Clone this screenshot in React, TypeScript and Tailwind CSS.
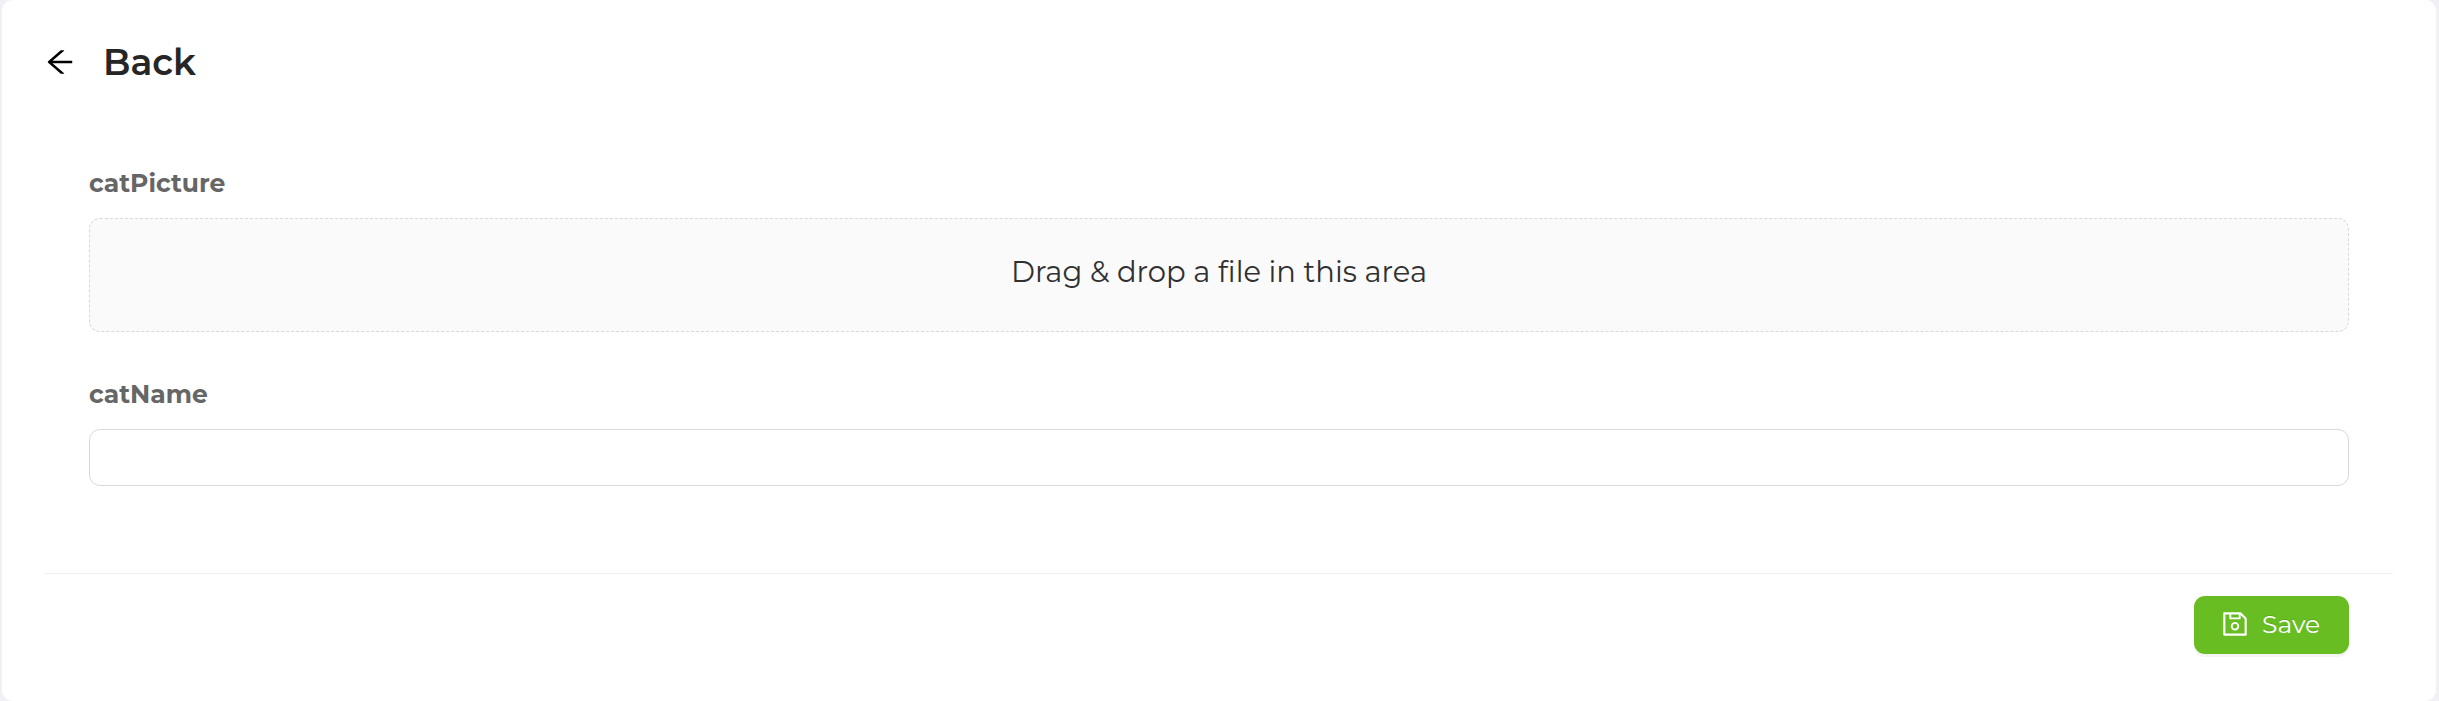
import { AiOutlineArrowLeft, AiOutlineSave } from "react-icons/ai";

function Label({ text }: { text: string }) {
  return (
    <label className="block h-[30px] text-[25px] leading-[31px] font-bold whitespace-nowrap text-[#666666]">
      {text}
    </label>
  );
}

export default function App() {
  return (
    <div className="h-[701px] w-full bg-[#f0f0f5] pr-[3px] pl-[2px] font-['Montserrat','Inter',sans-serif]">
      <main className="flex h-full flex-col rounded-[11px] bg-white px-[43px]">
        <header className="flex h-[125px] items-center">
          <button type="button" aria-label="Go back" className="-mt-px -ml-[2px] text-black">
            <AiOutlineArrowLeft size={34} />
          </button>
          <h1 className="-mt-[2px] ml-[26px] text-[36px] leading-[44px] font-semibold text-[#262626]">
            Back
          </h1>
        </header>
        <section className="h-[448px] px-[44px] pt-[43px]">
          <Label text="catPicture" />
          <div className="mt-[20px] flex h-[114px] items-center justify-center rounded-[11px] border border-dashed border-[#d9d9d9] bg-[#fafafa] text-[29px] leading-[36px] font-normal text-[#303030] [font-variant-ligatures:none]">
            <span className="-mt-[6px]">Drag &amp; drop a file in this area</span>
          </div>
          <div className="mt-[47px]">
            <Label text="catName" />
          </div>
          <input aria-label="catName" className="mt-[20px] block h-[57px] w-full rounded-[11px] border border-[#d9d9d9] bg-white px-4" />
        </section>
        <footer className="flex justify-end border-t border-[#f0f0f0] px-[44px] pt-[22px]">
          <button
            type="button"
            className="flex h-[58px] w-[155px] items-center rounded-[11px] bg-[#68bd22] pl-[26px] text-[25px] font-normal text-white shadow-[0_3px_0_rgba(0,0,0,0.045)] [text-shadow:0_-1px_0_rgba(0,0,0,0.12)]"
          >
            <AiOutlineSave size={30} className="-mt-[3px]" />
            <span className="ml-[12px]">Save</span>
          </button>
        </footer>
      </main>
    </div>
  );
}
